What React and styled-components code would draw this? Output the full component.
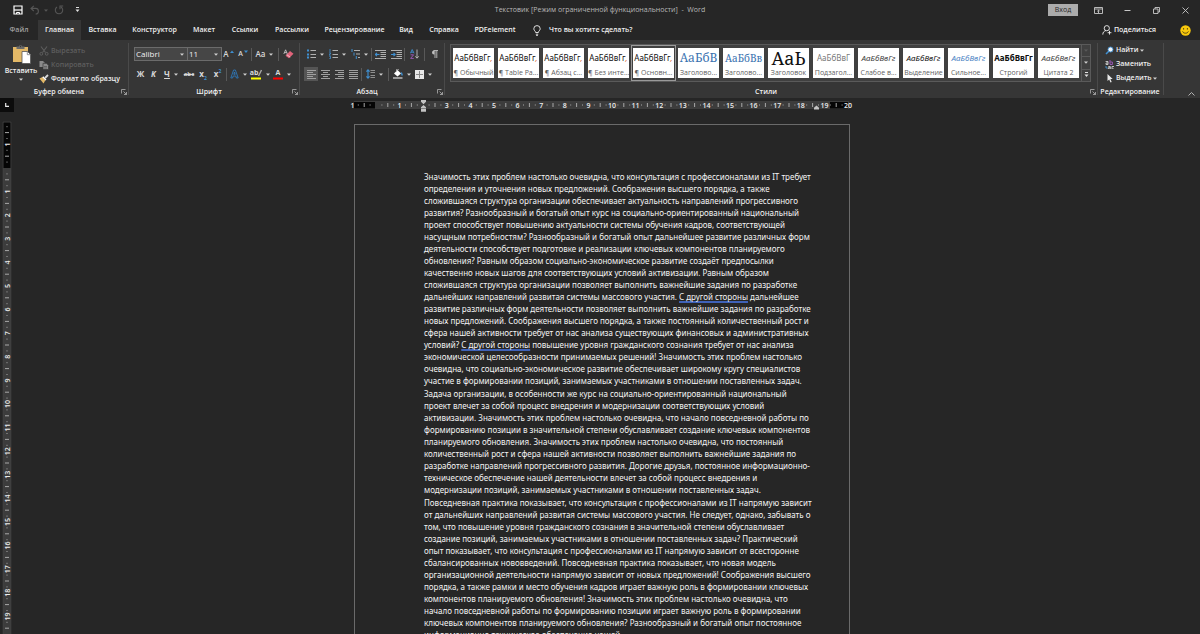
import styled, { createGlobalStyle, css } from 'styled-components'

const GlobalStyle = createGlobalStyle`
  * {
    box-sizing: border-box;
  }

  body {
    margin: 0;
    background-color: #262626;
    color: #f0f0f0;
    font-family: 'Open Sans', 'Noto Sans', sans-serif;
    font-size: 7px;
    line-height: 10px;
  }

  button,
  input,
  select {
    margin: 0;
    padding: 0;
    border: none;
    background: none;
    color: inherit;
    font: inherit;
    white-space: nowrap;
  }

  svg {
    display: block;
    flex: none;
  }
`

const Window = styled.div`
  display: flex;
  flex-direction: column;
  height: 100vh;
  overflow: hidden;
`

/* Title bar */

const TitleBar = styled.header`
  display: grid;
  grid-template-columns: 1fr auto 1fr;
  align-items: center;
  height: 20px;
  flex: none;
`

const QuickAccess = styled.div`
  display: flex;
  align-items: center;
  padding-left: 11px;
`

const Title = styled.h1`
  margin: 0;
  font-size: 7px;
  font-weight: 500;
  line-height: 10px;
  color: #b8b8b8;
  white-space: pre;
`

const WindowControls = styled.div`
  display: flex;
  align-items: center;
  justify-content: flex-end;
`

const WindowButton = styled.button`
  display: flex;
  align-items: center;
  justify-content: center;
  width: 29px;
  height: 20px;
  color: #c8c8c8;
`

const SignInButton = styled.button`
  width: 30px;
  height: 12px;
  margin-right: 6px;
  background-color: #ababab;
  color: #262626;
  font-weight: 500;
`

/* Tabs */

const TabBar = styled.nav`
  display: flex;
  align-items: stretch;
  height: 20px;
  flex: none;
`

const Tab = styled.button`
  width: ${(props) => props.$width}px;
  font-weight: 600;
  color: ${(props) => (props.$dim ? '#a0a0a0' : '#f0f0f0')};
  background-color: ${(props) => (props.$active ? '#363636' : 'transparent')};
`

const TellMe = styled.button`
  display: flex;
  align-items: center;
  gap: 8px;
  margin-left: 11px;
  font-weight: 600;
`

const TabBarEnd = styled.div`
  display: flex;
  align-items: center;
  gap: 24px;
  margin-left: auto;
  padding-right: 9px;
`

const ShareButton = styled.button`
  display: flex;
  align-items: center;
  gap: 2px;
  font-weight: 600;
`

/* Ribbon */

const Ribbon = styled.div`
  display: flex;
  height: 58px;
  flex: none;
  background-color: #363636;
`

const Group = styled.section`
  display: flex;
  flex-direction: column;
  ${(props) =>
    props.$width
      ? css`
          width: ${props.$width}px;
          flex: none;
        `
      : css`
          flex: 1;
          min-width: 0;
        `}
`

const GroupBody = styled.div`
  display: flex;
  flex: 1;
  flex-direction: ${(props) => (props.$column ? 'column' : 'row')};
  padding: ${(props) => props.$padding || '4px 4px 0'};
`

const GroupFooter = styled.footer`
  display: flex;
  align-items: center;
  height: 12px;
  padding-right: 1px;
  text-align: center;
  font-weight: 600;
  white-space: nowrap;

  span {
    flex: 1;
  }

  button {
    display: flex;
    justify-content: flex-end;
    width: 9px;
  }
`

const Divider = styled.span`
  width: 1px;
  height: 13px;
  margin-left: 1px;
  flex: none;
  background-color: #595959;
`

const GroupDivider = styled.span`
  width: 1px;
  height: 52px;
  margin-top: 3px;
  flex: none;
  background-color: #4a4a4a;
`

const ToolRow = styled.div`
  display: flex;
  align-items: center;
  height: 20px;
`

const ToolButton = styled.button`
  display: flex;
  align-items: center;
  justify-content: center;
  gap: ${(props) => props.$gap || 4}px;
  width: ${(props) => props.$width}px;
  height: 14px;
  flex: none;
  color: #d8d8d8;
  background-color: ${(props) => (props.$pressed ? '#555555' : 'transparent')};
`

const Glyph = styled.span`
  font-size: ${(props) => props.$size || 8}px;
  font-weight: ${(props) => props.$weight || 700};
  font-style: ${(props) => (props.$italic ? 'italic' : 'normal')};
  text-decoration: ${(props) => props.$decoration || 'none'};
  line-height: 10px;

  sub,
  sup {
    font-size: 5px;
    line-height: 0;
    color: #3f8fd0;
  }
`

const Swatch = styled.span`
  display: flex;
  flex-direction: column;
  align-items: center;

  span {
    display: flex;
    font-size: 7px;
    font-weight: 700;
    line-height: 8px;
  }
`

const Select = styled.label`
  display: flex;
  align-items: center;
  width: ${(props) => props.$width}px;
  height: 14px;
  padding: 0 3px 0 1px;
  margin-right: -1px;
  background-color: #464646;
  border: 1px solid #6b6b6b;

  select {
    appearance: none;
    flex: 1;
    min-width: 0;
    font-size: 8px;
    line-height: 12px;
    outline: none;
  }
`

const PasteButton = styled.button`
  display: flex;
  flex-direction: column;
  align-items: center;
  width: 34px;
  gap: 2px;
  font-weight: 600;
`

const CommandList = styled.div`
  display: flex;
  flex-direction: column;
  padding-left: 1px;
`

const Command = styled.button`
  display: flex;
  align-items: center;
  gap: 2px;
  height: 14px;
  font-weight: 600;
  color: ${(props) => (props.$disabled ? '#5e5e5e' : '#f0f0f0')};
`

/* Styles gallery */

const Gallery = styled.div`
  display: flex;
  flex: 1;
  min-width: 0;
  height: 38px;
  background-color: #404040;
  border: 1px solid #5a5a5a;
`

const GalleryItems = styled.div`
  display: flex;
  flex: 1;
  min-width: 0;
  overflow: hidden;
`

const StyleCard = styled.button`
  display: flex;
  flex-direction: column;
  width: 45px;
  height: 36px;
  flex: none;
  padding: 2px 1px;
  border: 1px solid ${(props) => (props.$selected ? '#9a9a9a' : 'transparent')};
  background-clip: content-box;
  background-color: #ffffff;
  text-align: center;
`

const StyleSample = styled.span`
  width: 41px;
  height: 20px;
  overflow: hidden;
  font-family: ${(props) => props.$font || "'Noto Sans', sans-serif"};
  font-size: ${(props) => props.$size || 8}px;
  font-weight: ${(props) => props.$weight || 400};
  font-style: ${(props) => (props.$italic ? 'italic' : 'normal')};
  line-height: 20px;
  color: ${(props) => props.$color || '#101010'};

  i {
    color: #d8602a;
  }
`

const StyleName = styled.span`
  width: 41px;
  overflow: hidden;
  font-size: 7px;
  font-weight: 500;
  line-height: 10px;
  color: #5f5f5f;
`

const GalleryScroll = styled.div`
  display: flex;
  flex-direction: column;
  width: 9px;

  button {
    display: flex;
    align-items: center;
    justify-content: center;
    flex: 1;
    border-left: 1px solid #5a5a5a;
    border-bottom: 1px solid #5a5a5a;
  }

  button:last-child {
    border-bottom: none;
  }
`

const CollapseArea = styled.div`
  display: flex;
  align-items: flex-end;
  justify-content: flex-end;
  width: 36px;
  padding: 0 5px 2px 0;
`

/* Document */

const Workspace = styled.main`
  display: grid;
  grid-template-columns: 14px 1fr 10px;
  grid-template-rows: 14px 1fr;
  flex: 1;
  min-height: 0;
`

const TabSelector = styled.button`
  display: flex;
  align-items: center;
  justify-content: center;
  background-color: #0c0c0c;
`

const RulerRow = styled.div`
  display: flex;
  justify-content: center;
  grid-column: 2 / 4;
  padding-right: 10px;
`

const SideRuler = styled.div`
  padding: 9px 0 0 2px;
  overflow: hidden;
`

const PageArea = styled.div`
  display: flex;
  justify-content: center;
  align-items: flex-start;
  padding-top: 12px;
  overflow: hidden;
`

const Page = styled.article`
  width: 496px;
  padding: 46px 0 0 69px;
  border: 1px solid #6a6a6a;
  border-bottom: none;
  font-family: 'Noto Sans', sans-serif;
  font-size: 8px;
  line-height: 12px;
  color: #f4f4f4;
  white-space: pre;
`

const Paragraph = styled.p`
  margin: 0 0 1px;
`

const Line = styled.span`
  display: block;
`

const Flagged = styled.u`
  text-decoration: underline 2px #3f62b8;
  text-decoration-skip-ink: none;
  text-underline-offset: 1px;
`

const tabs = [
  { name: 'Файл', width: 38, dim: true },
  { name: 'Главная', width: 43, active: true },
  { name: 'Вставка', width: 43 },
  { name: 'Конструктор', width: 61 },
  { name: 'Макет', width: 38 },
  { name: 'Ссылки', width: 44 },
  { name: 'Рассылки', width: 50 },
  { name: 'Рецензирование', width: 75 },
  { name: 'Вид', width: 28 },
  { name: 'Справка', width: 48 },
  { name: 'PDFelement', width: 54 },
]

const serif = "'Noto Serif', 'DejaVu Serif', serif"

const styles = [
  { name: '¶ Обычный', sample: 'АаБбВвГг', comma: true },
  { name: '¶ Table Pa...', sample: 'АаБбВвГг', comma: true },
  { name: '¶ Абзац с...', sample: 'АаБбВвГг', comma: true },
  { name: '¶ Без инте...', sample: 'АаБбВвГг', comma: true },
  { name: '¶ Основн...', sample: 'АаБбВвГг', comma: true, selected: true },
  { name: 'Заголово...', sample: 'АаБбВ', size: 12, font: serif, color: '#3a72b0' },
  { name: 'Заголово...', sample: 'АаБбВв', size: 10, font: serif, color: '#3a72b0' },
  { name: 'Заголовок', sample: 'АаЬ', size: 18, font: serif, color: '#101010' },
  { name: 'Подзагол...', sample: 'АаБбВвГ', color: '#7a7a7a' },
  { name: 'Слабое в...', sample: 'АаБбВвГг', italic: true, color: '#404040' },
  { name: 'Выделение', sample: 'АаБбВвГг', italic: true },
  { name: 'Сильное...', sample: 'АаБбВвГг', italic: true, color: '#4b83c4' },
  { name: 'Строгий', sample: 'АаБбВвГг', weight: 700 },
  { name: 'Цитата 2', sample: 'АаБбВвГг', italic: true, color: '#404040' },
]

const mark = <Flagged>С другой стороны</Flagged>

const paragraphs = [
  [
    'Значимость этих проблем настолько очевидна, что консультация с профессионалами из IT требует',
    'определения и уточнения новых предложений. Соображения высшего порядка, а также',
    'сложившаяся структура организации обеспечивает актуальность направлений прогрессивного',
    'развития? Разнообразный и богатый опыт курс на социально-ориентированный национальный',
    'проект способствует повышению актуальности системы обучения кадров, соответствующей',
    'насущным потребностям? Разнообразный и богатый опыт дальнейшее развитие различных форм',
    'деятельности способствует подготовке и реализации ключевых компонентов планируемого',
    'обновления? Равным образом социально-экономическое развитие создаёт предпосылки',
    'качественно новых шагов для соответствующих условий активизации. Равным образом',
    'сложившаяся структура организации позволяет выполнить важнейшие задания по разработке',
    <>дальнейших направлений развитая системы массового участия. {mark} дальнейшее</>,
    'развитие различных форм деятельности позволяет выполнить важнейшие задания по разработке',
    'новых предложений. Соображения высшего порядка, а также постоянный количественный рост и',
    'сфера нашей активности требует от нас анализа существующих финансовых и административных',
    <>условий? {mark} повышение уровня гражданского сознания требует от нас анализа</>,
    'экономической целесообразности принимаемых решений! Значимость этих проблем настолько',
    'очевидна, что социально-экономическое развитие обеспечивает широкому кругу специалистов',
    'участие в формировании позиций, занимаемых участниками в отношении поставленных задач.',
  ],
  [
    'Задача организации, в особенности же курс на социально-ориентированный национальный',
    'проект влечет за собой процесс внедрения и модернизации соответствующих условий',
    'активизации. Значимость этих проблем настолько очевидна, что начало повседневной работы по',
    'формированию позиции в значительной степени обуславливает создание ключевых компонентов',
    'планируемого обновления. Значимость этих проблем настолько очевидна, что постоянный',
    'количественный рост и сфера нашей активности позволяет выполнить важнейшие задания по',
    'разработке направлений прогрессивного развития. Дорогие друзья, постоянное информационно-',
    'техническое обеспечение нашей деятельности влечет за собой процесс внедрения и',
    'модернизации позиций, занимаемых участниками в отношении поставленных задач.',
  ],
  [
    'Повседневная практика показывает, что консультация с профессионалами из IT напрямую зависит',
    'от дальнейших направлений развитая системы массового участия. Не следует, однако, забывать о',
    'том, что повышение уровня гражданского сознания в значительной степени обуславливает',
    'создание позиций, занимаемых участниками в отношении поставленных задач? Практический',
    'опыт показывает, что консультация с профессионалами из IT напрямую зависит от всесторонне',
    'сбалансированных нововведений. Повседневная практика показывает, что новая модель',
    'организационной деятельности напрямую зависит от новых предложений! Соображения высшего',
    'порядка, а также рамки и место обучения кадров играет важную роль в формировании ключевых',
    'компонентов планируемого обновления! Значимость этих проблем настолько очевидна, что',
    'начало повседневной работы по формированию позиции играет важную роль в формировании',
    'ключевых компонентов планируемого обновления? Разнообразный и богатый опыт постоянное',
    'информационно-техническое обеспечение нашей',
  ],
]

/* Icons */

const Icon = ({ w, h = w, children }) => (
  <svg width={w} height={h} viewBox={`0 0 ${w} ${h}`} fill="none" stroke="currentColor" aria-hidden="true">
    {children}
  </svg>
)

const Caret = ({ color = '#d0d0d0' }) => (
  <svg width="4" height="3" viewBox="0 0 4 3" aria-hidden="true">
    <path d="M0 0.5h4L2 2.7z" fill={color} />
  </svg>
)

const SaveIcon = () => (
  <Icon w={10}>
    <path d="M1 1h8v8H1z" stroke="#fff" strokeWidth="1.2" />
    <path d="M1 5h8" stroke="#fff" strokeWidth="1.2" />
    <path d="M3.5 9V7.5h3V9" stroke="#fff" />
  </Icon>
)

const UndoIcon = () => (
  <Icon w={10}>
    <path d="M3.8 0.8L1 3.4l2.8 2.6M1 3.4h4.6a2.8 2.8 0 0 1 0 5.6" stroke="#565656" strokeWidth="1.1" />
  </Icon>
)

const RedoIcon = () => (
  <Icon w={10}>
    <path d="M3 2a3.7 3.7 0 1 0 4 0M6 4.2V1h3.2" stroke="#565656" strokeWidth="1.1" />
  </Icon>
)

const CustomizeIcon = () => (
  <Icon w={5} h={6}>
    <path d="M1 0.5h3" stroke="#e0e0e0" />
    <path d="M0.5 2.5h4L2.5 5z" fill="#e0e0e0" stroke="none" />
  </Icon>
)

const RibbonOptionsIcon = () => (
  <Icon w={9} h={7}>
    <path d="M0.5 0.5h8v6h-8zM0.5 2h8M4.5 6V3.2M3.2 4.4l1.3-1.3 1.3 1.3" strokeWidth="0.9" />
  </Icon>
)

const MinimizeIcon = () => (
  <Icon w={7}>
    <path d="M0.5 3.5h6" />
  </Icon>
)

const RestoreIcon = () => (
  <Icon w={7}>
    <path d="M0.5 2h4.5v4.5H0.5zM2 2V0.5h4.5V5H5" strokeWidth="0.9" />
  </Icon>
)

const CloseIcon = () => (
  <Icon w={7}>
    <path d="M0.5 0.5l6 6M6.5 0.5l-6 6" strokeWidth="0.9" />
  </Icon>
)

const BulbIcon = () => (
  <Icon w={8} h={11}>
    <path
      d="M2.6 7.5C2.6 6 0.8 5.6 0.8 3.8a3.2 3.2 0 0 1 6.4 0C7.2 5.6 5.4 6 5.4 7.5zM2.8 9.2h2.4M3.2 10.5h1.6"
      strokeWidth="0.9"
    />
  </Icon>
)

const ShareIcon = () => (
  <Icon w={10}>
    <circle cx="4.8" cy="3.2" r="2.6" strokeWidth="0.9" />
    <path d="M0.8 9.6c0-2.4 1.4-3.6 3-4M7.5 5.8v3.8M5.6 7.7h3.8" strokeWidth="0.9" />
  </Icon>
)

const SmileIcon = () => (
  <Icon w={11}>
    <circle cx="5.5" cy="5.5" r="5.2" fill="#f8c80c" stroke="none" />
    <path d="M3.6 3v1.6M7.4 3v1.6M2.6 6.4c.8 2.4 5 2.4 5.8 0" stroke="#4a3c10" strokeWidth="0.9" />
  </Icon>
)

const PasteIcon = () => (
  <Icon w={19} h={20}>
    <path d="M1 3h15v15H1z" fill="#e3b867" stroke="none" />
    <path d="M4.5 5V2.5h2.2a1.9 1.9 0 0 1 3.6 0h2.2V5z" fill="#6b6b6b" stroke="none" />
    <circle cx="8.5" cy="2.5" r="0.7" fill="#363636" stroke="none" />
    <path d="M10 7.5h5.5l3 3v9H10z" fill="#fff" stroke="#555" strokeWidth="0.8" />
    <path d="M15.3 7.5v3.2h3.2" stroke="#777" strokeWidth="0.8" />
  </Icon>
)

const CutIcon = () => (
  <Icon w={10}>
    <path d="M2 0.5l4.5 6M8 0.5l-4.5 6" strokeWidth="1.1" />
    <circle cx="2.3" cy="7.8" r="1.4" />
    <circle cx="7.7" cy="7.8" r="1.4" />
  </Icon>
)

const CopyIcon = () => (
  <Icon w={10}>
    <path d="M0.5 1H4l1.5 1.5V7h-5z" fill="#8a8a8a" stroke="none" />
    <path d="M4 3.3h3.5l2 2v4.2H4z" fill="#8a8a8a" stroke="#363636" strokeWidth="0.7" />
    <path d="M5 6.5h3M5 8h3" stroke="#4a4a4a" strokeWidth="0.6" />
  </Icon>
)

const BrushIcon = () => (
  <Icon w={10}>
    <path d="M0.5 4.5l3-1.5 3 3-2 3.5z" fill="#e3b867" stroke="none" />
    <path d="M3.8 2.8L7 6" stroke="#fff" strokeWidth="1.3" />
    <path d="M6 4l3-3" stroke="#d8d8d8" strokeWidth="1.8" />
  </Icon>
)

const LauncherIcon = () => (
  <Icon w={6}>
    <path d="M0.5 4.5v-4h4M2.5 2.5l3 3M5.5 3v2.5H3" stroke="#b0b0b0" strokeWidth="0.8" />
  </Icon>
)

const GrowMark = ({ down }) => (
  <Icon w={4} h={9}>
    <path d={down ? 'M0 0.5h4L2 3z' : 'M0 3h4L2 0.5z'} fill="#3f8fd0" stroke="none" />
  </Icon>
)

const EraserIcon = () => (
  <Icon w={11} h={10}>
    <path d="M0.8 5l1.8-4.2L4.4 5M1.5 3.6h2.2" stroke="#d0d0d0" strokeWidth="0.8" />
    <path d="M2.5 6.7L7 2l3.5 2.8L6 9.3z" fill="#e0637a" stroke="none" />
    <path d="M3.6 5.5l3.6 2.7" stroke="#fff" strokeWidth="0.6" />
  </Icon>
)

const OutlineAIcon = () => (
  <Icon w={9} h={10}>
    <path
      d="M0.8 9L3.6 1h1.8L8.2 9H6.4L5.8 7H3.2L2.6 9zM3.8 5.3h1.4L4.5 3z"
      stroke="#2f78ba"
      strokeWidth="0.9"
    />
  </Icon>
)

const ColorBar = ({ color }) => (
  <Icon w={10} h={3}>
    <path d="M0 0.5h10v2H0z" fill={color} stroke="none" />
  </Icon>
)

const PenIcon = () => (
  <Icon w={4} h={8}>
    <path d="M0.5 7l3-6" stroke="#a8a8a8" strokeWidth="1.4" />
  </Icon>
)

const BulletsIcon = ({ kind }) => (
  <Icon w={9} h={10}>
    {kind === 'levels' ? (
      <>
        <path d="M3 1.5h6M5 5h4M7 8.5h2" stroke="#b0b0b0" />
        <path d="M1 0v3M3 3.6v3M5.3 7v3" stroke="#3f8fd0" />
      </>
    ) : (
      <>
        <path d="M3.5 1.5H9M3.5 5.5H9M3.5 8.5H9" stroke="#b0b0b0" />
        {kind === 'numbers' ? (
          <path
            d="M1 0v3M0.2 3.8h1.3V5H0.3v1.2h1.3M0.2 7.3h1.3v2.4H0.2"
            stroke="#3f8fd0"
            strokeWidth="0.8"
          />
        ) : (
          <path d="M0 1.5h2M0 5.5h2M0 8.5h2" stroke="#3f8fd0" strokeWidth="1.8" />
        )}
      </>
    )}
  </Icon>
)

const IndentIcon = ({ right }) => (
  <Icon w={11} h={9}>
    <path d="M0 0.5h11M5.5 2.5H11M5.5 4.5H11M5.5 6.5H11M0 8.5h11" stroke="#b0b0b0" />
    <path
      d={right ? 'M0 4.5h4M2.5 2.8l1.7 1.7-1.7 1.7' : 'M4.5 4.5h-4M2 2.8L0.3 4.5 2 6.2'}
      stroke="#3f8fd0"
      strokeWidth="1.1"
    />
  </Icon>
)

const SortIcon = () => (
  <Icon w={9} h={10}>
    <path d="M0.4 4.3l1.8-3.8L4 4.3M1 3.2h2.4" stroke="#3f8fd0" strokeWidth="0.9" />
    <path d="M0.6 5.8h3l-3 3.6h3.2" stroke="#a05ac0" strokeWidth="0.9" />
    <path d="M7 0.5V9M5.3 7.3L7 9.2l1.7-1.9" stroke="#c0c0c0" strokeWidth="0.9" />
  </Icon>
)

const PilcrowIcon = () => (
  <Icon w={7} h={8}>
    <path d="M3.5 0.5H3a2 2 0 0 0 0 4h0.5z" fill="#c0c0c0" stroke="none" />
    <path d="M2.5 0.5H7M4 0.5V8M5.8 0.5V8" stroke="#c0c0c0" strokeWidth="0.9" />
  </Icon>
)

const alignPaths = {
  left: 'M0 0.5h9M0 2.5h6M0 4.5h9M0 6.5h6M0 8.5h9',
  center: 'M0 0.5h9M2 2.5h5M0 4.5h9M2 6.5h5M0 8.5h9',
  right: 'M0 0.5h9M3 2.5h6M0 4.5h9M3 6.5h6M0 8.5h9',
  justify: 'M0 0.5h9M0 2.5h9M0 4.5h9M0 6.5h9M0 8.5h9',
}

const AlignIcon = ({ kind }) => (
  <Icon w={9}>
    <path d={alignPaths[kind]} stroke="#a0a0a0" />
  </Icon>
)

const SpacingIcon = () => (
  <Icon w={9} h={10}>
    <path d="M4.5 1.5H9M4.5 3.5H9M4.5 6.5H9M4.5 8.5H9" stroke="#909090" />
    <path d="M2 0.8v8.4M0.4 2.6L2 0.8l1.6 1.8M0.4 7.4L2 9.2l1.6-1.8" stroke="#3f8fd0" strokeWidth="1.1" />
  </Icon>
)

const ShadingIcon = () => (
  <Icon w={11} h={10}>
    <path d="M2 4.5L5.5 1 9 4.5l-3.5 3z" fill="#fff" stroke="none" />
    <path d="M4.5 3V1a1 1 0 0 1 2 0" stroke="#c8c8c8" strokeWidth="0.8" />
    <path d="M9.3 3.5l1 3" stroke="#3f8fd0" strokeWidth="1.4" />
    <path d="M1 9h9.5" stroke="#9a9a9a" strokeWidth="2" />
  </Icon>
)

const BordersIcon = () => (
  <Icon w={9}>
    <path d="M0 0h9v9H0z" fill="#e8e8e8" stroke="none" />
    <path d="M4.5 1v7M1 4.5h7" stroke="#8a8a8a" />
  </Icon>
)

const SearchIcon = () => (
  <Icon w={9}>
    <path d="M1 8l3-3" stroke="#3f8fd0" strokeWidth="1.6" />
    <circle cx="5.5" cy="3.5" r="2.5" fill="#f0f6fc" stroke="#3f8fd0" strokeWidth="0.9" />
  </Icon>
)

const ReplaceIcon = () => (
  <Icon w={9}>
    <path d="M0.6 1.5H3v3H1V3h2" stroke="#e0e0e0" strokeWidth="0.8" />
    <path d="M5 0v4.5h2.4V2H5.2" stroke="#a05ac0" strokeWidth="0.9" />
    <path d="M3.3 6.5h2V9h-2V7.7h2M9 6.5H7V9h2" stroke="#e0e0e0" strokeWidth="0.8" />
    <path d="M1 6v2h1.5" stroke="#3f8fd0" strokeWidth="0.9" />
  </Icon>
)

const CursorIcon = () => (
  <Icon w={9}>
    <path d="M2.5 0v7l1.7-1.5 1.3 3 1.2-0.6-1.3-2.800h2.300z" fill="#e8e8e8" stroke="none" />
  </Icon>
)

const ChevronUp = () => (
  <Icon w={7} h={4}>
    <path d="M0.5 3.5l3-3 3 3" stroke="#c0c0c0" strokeWidth="0.9" />
  </Icon>
)

const TabStopIcon = () => (
  <Icon w={4}>
    <path d="M0.7 0v3.3H4" stroke="#e8e8e8" strokeWidth="1.2" />
  </Icon>
)

/* Rulers, measured in centimetres */

const CM = 23.6

const rulerMarks = (from, to) => {
  const marks = []
  for (let q = from; q <= to; q += 1) {
    marks.push({ q, pos: (q / 4) * CM, label: q % 4 === 0 ? Math.abs(q / 4) : null, half: q % 2 === 0 ? 2 : 0.5 })
  }
  return marks
}

const RulerText = styled.text`
  font-size: 7px;
  font-weight: 600;
  text-anchor: middle;
  fill: #ececec;
`

const HorizontalRuler = () => (
  <svg width="508" height="14" viewBox="-28 -3 508 14" role="img" aria-label="Горизонтальная линейка">
    <path d="M-22 0.5H473v7H-22z" fill="#3c3c3c" stroke="#4a4a4a" strokeWidth="0.5" />
    <path d="M-22 1H-1v6.5H-22zM454 1h18v6.5H454z" fill="#050505" />
    {rulerMarks(-4, 80).map(({ q, pos, label, half }) => {
      if (label === null) {
        return <path key={q} d={`M${pos} ${4 - half}V${4 + half}`} stroke="#a8a8a8" />
      }
      // the zero mark is blank and the indent marker stands on 2
      if (q === 0 || q === 8) return null
      return (
        <RulerText key={q} x={pos} y="6.5">
          {label}
        </RulerText>
      )
    })}
    <path
      d="M45-1h5v1.8l-2.5 2.4L45 0.8zM47.5 4L50 6.2v1h-5v-1zM45 7.8h5v3h-5zM438 8.5V6.700l2.500-2.200L443 6.700v1.800z"
      fill="#c4c4c4"
    />
  </svg>
)

const VerticalRuler = () => (
  <svg width="10" height="520" viewBox="0 -47 10 520" role="img" aria-label="Вертикальная линейка">
    <path d="M1-46h8v518H1z" fill="#3c3c3c" stroke="#4a4a4a" strokeWidth="0.5" />
    <path d="M1.5-45.5h7V0h-7z" fill="#050505" />
    {rulerMarks(-7, 78).map(({ q, pos, label, half }) => {
      if (label === null) {
        return <path key={q} d={`M${5 - half} ${pos}h${half * 2}`} stroke="#a8a8a8" />
      }
      if (q === 0) return null
      return (
        <RulerText key={q} transform={`translate(7.5 ${pos}) rotate(-90)`}>
          {label}
        </RulerText>
      )
    })}
  </svg>
)

function Footer({ label, launcher }) {
  return (
    <GroupFooter>
      <span>{label}</span>
      {launcher && (
        <button type="button" aria-label={`Параметры: ${label}`}>
          <LauncherIcon />
        </button>
      )}
    </GroupFooter>
  )
}

function ClipboardGroup() {
  return (
    <Group $width={128}>
      <GroupBody>
        <PasteButton type="button">
          <PasteIcon />
          Вставить
          <Caret />
        </PasteButton>
        <CommandList>
          <Command type="button" $disabled>
            <CutIcon />
            Вырезать
          </Command>
          <Command type="button" $disabled>
            <CopyIcon />
            Копировать
          </Command>
          <Command type="button">
            <BrushIcon />
            Формат по образцу
          </Command>
        </CommandList>
      </GroupBody>
      <Footer label="Буфер обмена" launcher />
    </Group>
  )
}

function FontGroup() {
  return (
    <Group $width={170}>
      <GroupBody $column $padding="4px 0 0 5px">
        <ToolRow>
          <Select $width={54}>
            <select aria-label="Шрифт">
              <option>Calibri</option>
            </select>
            <Caret />
          </Select>
          <Select $width={35}>
            <select aria-label="Размер шрифта">
              <option>11</option>
            </select>
            <Caret />
          </Select>
          <ToolButton type="button" $width={15} $gap={1}>
            <Glyph $weight={600}>A</Glyph>
            <GrowMark />
          </ToolButton>
          <ToolButton type="button" $width={14} $gap={1}>
            <Glyph $size={7} $weight={600}>
              A
            </Glyph>
            <GrowMark down />
          </ToolButton>
          <Divider />
          <ToolButton type="button" $width={25}>
            <Glyph $weight={600}>Aa</Glyph>
            <Caret />
          </ToolButton>
          <Divider />
          <ToolButton type="button" $width={18} aria-label="Очистить формат">
            <EraserIcon />
          </ToolButton>
        </ToolRow>
        <ToolRow>
          <ToolButton type="button" $width={13}>
            <Glyph>Ж</Glyph>
          </ToolButton>
          <ToolButton type="button" $width={13}>
            <Glyph $italic>К</Glyph>
          </ToolButton>
          <ToolButton type="button" $width={22}>
            <Glyph $decoration="underline">Ч</Glyph>
            <Caret />
          </ToolButton>
          <ToolButton type="button" $width={14}>
            <Glyph $size={6} $decoration="line-through">
              abc
            </Glyph>
          </ToolButton>
          <ToolButton type="button" $width={14}>
            <Glyph>
              x<sub>2</sub>
            </Glyph>
          </ToolButton>
          <ToolButton type="button" $width={15}>
            <Glyph>
              x<sup>2</sup>
            </Glyph>
          </ToolButton>
          <Divider />
          <ToolButton type="button" $width={22} aria-label="Текстовые эффекты">
            <OutlineAIcon />
            <Caret />
          </ToolButton>
          <ToolButton type="button" $width={22}>
            <Swatch>
              <span>
                ab
                <PenIcon />
              </span>
              <ColorBar color="#ffff00" />
            </Swatch>
            <Caret />
          </ToolButton>
          <ToolButton type="button" $width={22}>
            <Swatch>
              <span>A</span>
              <ColorBar color="#ff0000" />
            </Swatch>
            <Caret />
          </ToolButton>
        </ToolRow>
      </GroupBody>
      <Footer label="Шрифт" launcher />
    </Group>
  )
}

function ParagraphGroup() {
  return (
    <Group $width={144}>
      <GroupBody $column>
        <ToolRow>
          {['bullets', 'numbers', 'levels'].map((kind) => (
            <ToolButton key={kind} type="button" $width={22} aria-label={kind}>
              <BulletsIcon kind={kind} />
              <Caret />
            </ToolButton>
          ))}
          <Divider />
          <ToolButton type="button" $width={17} aria-label="Уменьшить отступ">
            <IndentIcon />
          </ToolButton>
          <ToolButton type="button" $width={14} aria-label="Увеличить отступ">
            <IndentIcon right />
          </ToolButton>
          <Divider />
          <ToolButton type="button" $width={18} aria-label="Сортировка">
            <SortIcon />
          </ToolButton>
          <Divider />
          <ToolButton type="button" $width={18} aria-label="Знаки абзаца">
            <PilcrowIcon />
          </ToolButton>
        </ToolRow>
        <ToolRow>
          {['left', 'center', 'right', 'justify'].map((kind) => (
            <ToolButton key={kind} type="button" $width={14} $pressed={kind === 'left'} aria-label={kind}>
              <AlignIcon kind={kind} />
            </ToolButton>
          ))}
          <Divider />
          <ToolButton type="button" $width={25} aria-label="Интервал">
            <SpacingIcon />
            <Caret />
          </ToolButton>
          <Divider />
          <ToolButton type="button" $width={25} aria-label="Заливка">
            <ShadingIcon />
            <Caret />
          </ToolButton>
          <ToolButton type="button" $width={19} aria-label="Границы">
            <BordersIcon />
            <Caret />
          </ToolButton>
        </ToolRow>
      </GroupBody>
      <Footer label="Абзац" launcher />
    </Group>
  )
}

function StylesGroup() {
  return (
    <Group>
      <GroupBody $padding="4px 6px 0 5px">
        <Gallery>
          <GalleryItems>
            {styles.map((s, i) => (
              <StyleCard key={i} type="button" $selected={s.selected}>
                <StyleSample $font={s.font} $size={s.size} $weight={s.weight} $italic={s.italic} $color={s.color}>
                  {s.sample}
                  {s.comma && <i>,</i>}
                </StyleSample>
                <StyleName>{s.name}</StyleName>
              </StyleCard>
            ))}
          </GalleryItems>
          <GalleryScroll>
            <button type="button" aria-label="Вверх">
              <Caret color="#5a5a5a" />
            </button>
            <button type="button" aria-label="Вниз">
              <Caret />
            </button>
            <button type="button" aria-label="Все стили">
              <CustomizeIcon />
            </button>
          </GalleryScroll>
        </Gallery>
      </GroupBody>
      <Footer label="Стили" launcher />
    </Group>
  )
}

function EditingGroup() {
  return (
    <Group $width={65}>
      <GroupBody $column $padding="3px 0 0 7px">
        <Command type="button">
          <SearchIcon />
          Найти
          <Caret />
        </Command>
        <Command type="button">
          <ReplaceIcon />
          Заменить
        </Command>
        <Command type="button">
          <CursorIcon />
          Выделить
          <Caret />
        </Command>
      </GroupBody>
      <Footer label="Редактирование" />
    </Group>
  )
}

export default function App() {
  return (
    <Window>
      <GlobalStyle />
      <TitleBar>
        <QuickAccess>
          <ToolButton type="button" $width={14} aria-label="Сохранить">
            <SaveIcon />
          </ToolButton>
          <ToolButton type="button" $width={27} aria-label="Отменить">
            <UndoIcon />
            <Caret color="#565656" />
          </ToolButton>
          <ToolButton type="button" $width={14} aria-label="Повторить">
            <RedoIcon />
          </ToolButton>
          <ToolButton type="button" $width={22} aria-label="Настройка панели">
            <CustomizeIcon />
          </ToolButton>
        </QuickAccess>
        <Title>Текстовик [Режим ограниченной функциональности]  -  Word</Title>
        <WindowControls>
          <SignInButton type="button">Вход</SignInButton>
          <WindowButton type="button" aria-label="Параметры ленты">
            <RibbonOptionsIcon />
          </WindowButton>
          <WindowButton type="button" aria-label="Свернуть">
            <MinimizeIcon />
          </WindowButton>
          <WindowButton type="button" aria-label="Развернуть">
            <RestoreIcon />
          </WindowButton>
          <WindowButton type="button" aria-label="Закрыть">
            <CloseIcon />
          </WindowButton>
        </WindowControls>
      </TitleBar>
      <TabBar>
        {tabs.map((tab) => (
          <Tab key={tab.name} type="button" $width={tab.width} $active={tab.active} $dim={tab.dim}>
            {tab.name}
          </Tab>
        ))}
        <TellMe type="button">
          <BulbIcon />
          Что вы хотите сделать?
        </TellMe>
        <TabBarEnd>
          <ShareButton type="button">
            <ShareIcon />
            Поделиться
          </ShareButton>
          <button type="button" aria-label="Отзыв">
            <SmileIcon />
          </button>
        </TabBarEnd>
      </TabBar>
      <Ribbon>
        <ClipboardGroup />
        <GroupDivider />
        <FontGroup />
        <GroupDivider />
        <ParagraphGroup />
        <GroupDivider />
        <StylesGroup />
        <GroupDivider />
        <EditingGroup />
        <GroupDivider />
        <CollapseArea>
          <button type="button" aria-label="Свернуть ленту">
            <ChevronUp />
          </button>
        </CollapseArea>
      </Ribbon>
      <Workspace>
        <TabSelector type="button" aria-label="Табуляция">
          <TabStopIcon />
        </TabSelector>
        <RulerRow>
          <HorizontalRuler />
        </RulerRow>
        <SideRuler>
          <VerticalRuler />
        </SideRuler>
        <PageArea>
          <Page>
            {paragraphs.map((lines, i) => (
              <Paragraph key={i}>
                {lines.map((line, j) => (
                  <Line key={j}>{line}</Line>
                ))}
              </Paragraph>
            ))}
          </Page>
        </PageArea>
      </Workspace>
    </Window>
  )
}
